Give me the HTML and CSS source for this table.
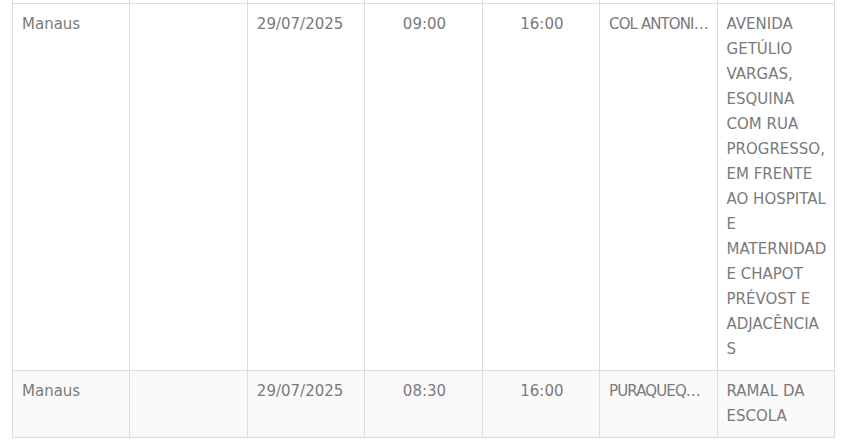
FILE: index.html
```html
<!DOCTYPE html>
<html lang="pt-BR">
<head>
<meta charset="utf-8">
<title>Tabela</title>
<link rel="stylesheet" href="styles.css">
</head>
<body>
<div class="wrap">
<table class="grid">
  <tbody>
    <tr class="prev">
      <td></td><td></td><td></td><td></td><td></td><td></td><td></td>
    </tr>
    <tr class="odd">
      <td>Manaus</td>
      <td></td>
      <td>29/07/2025</td>
      <td class="c">09:00</td>
      <td class="c">16:00</td>
      <td class="clip">COL ANTONIO TELLES</td>
      <td class="wrapcell">AVENIDA GETÚLIO VARGAS, ESQUINA COM RUA PROGRESSO, EM FRENTE AO HOSPITAL E MATERNIDADE CHAPOT PRÉVOST E ADJACÊNCIAS</td>
    </tr>
    <tr class="even">
      <td>Manaus</td>
      <td></td>
      <td>29/07/2025</td>
      <td class="c">08:30</td>
      <td class="c">16:00</td>
      <td class="clip">PURAQUEQUARA</td>
      <td class="wrapcell">RAMAL DA ESCOLA</td>
    </tr>
  </tbody>
</table>
</div>
</body>
</html>
```
FILE: styles.css
```css
html, body {
  margin: 0;
  padding: 0;
  background: #ffffff;
}
.wrap {
  padding-left: 12px;
}
.grid {
  width: 823px;
  table-layout: fixed;
  border-collapse: collapse;
  font-family: "DejaVu Sans", "Liberation Sans", sans-serif;
  font-size: 15px;
  color: #7a7a7a;
  line-height: 25px;
}
.grid td {
  border: 1px solid #dcdcdc;
  padding: 8px 7px 8px 9px;
  vertical-align: top;
  text-align: left;
}
.grid tr.prev td {
  height: 3px;
  padding: 0;
  line-height: 0;
  border-top: none;
}
.grid tr.even td {
  background: #fafafa;
}
.grid td.c {
  text-align: center;
}
.grid td.clip {
  white-space: nowrap;
  overflow: hidden;
  text-overflow: ellipsis;
  letter-spacing: -0.9px;
}
.grid td.wrapcell {
  overflow-wrap: anywhere;
}
```
